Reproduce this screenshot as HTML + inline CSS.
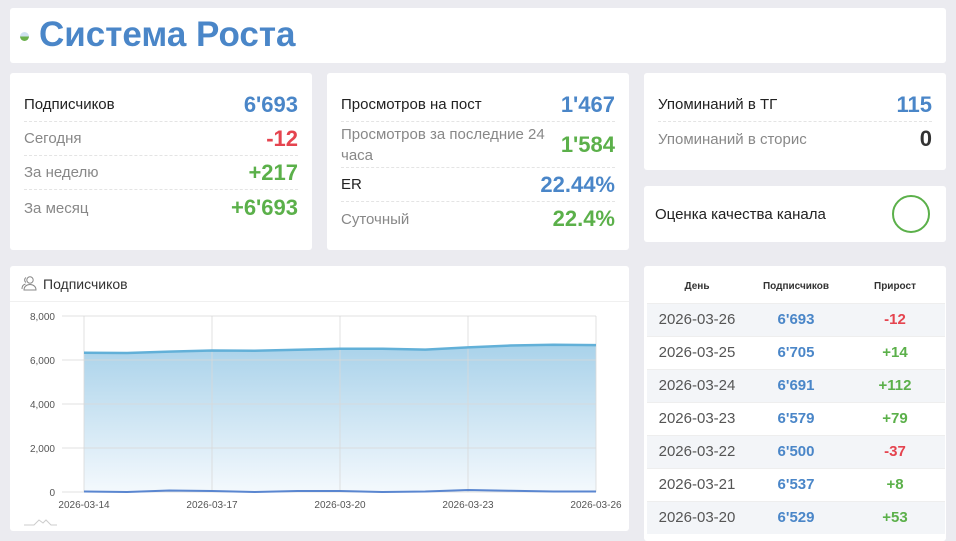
<!DOCTYPE html><html><head><meta charset="utf-8"><style>
*{margin:0;padding:0;box-sizing:border-box}
body{width:956px;height:536px;overflow:hidden;background:#ebebf0;font-family:"Liberation Sans",sans-serif;position:relative}
.card{position:absolute;background:#fff;border-radius:3px}
.row{position:absolute;left:14px;right:14px;display:flex;justify-content:space-between;align-items:center;border-bottom:1px dashed #e4e4e4}
.l{font-size:15px;color:#888}.l.b{color:#222}
.v{font-size:22px;font-weight:bold}
.blue{color:#4a86c8}.red{color:#e5444f}.green{color:#5bb04a}.dark{color:#333}
table{border-collapse:collapse;width:298px;table-layout:fixed}
td{height:33px;text-align:center;font-size:15px}
</style></head><body>
<div class="card" style="left:10px;top:8px;width:936px;height:55px">
<div style="position:absolute;left:10px;top:24px;width:9px;height:9px;border-radius:50%;background:linear-gradient(#cfe0f0 50%,#6ab04c 50%)"></div>
<div style="position:absolute;left:29px;top:7px;font-size:35px;font-weight:bold;color:#4a86c8">Система Роста</div></div>

<div class="card" style="left:10px;top:73px;width:302px;height:177px">
<div class="row" style="top:15px;height:34px"><span class="l b">Подписчиков</span><span class="v blue">6'693</span></div>
<div class="row" style="top:49px;height:34px"><span class="l">Сегодня</span><span class="v red">-12</span></div>
<div class="row" style="top:83px;height:34px"><span class="l">За неделю</span><span class="v green">+217</span></div>
<div class="row" style="top:117px;height:36px;border:0"><span class="l">За месяц</span><span class="v green">+6'693</span></div></div>

<div class="card" style="left:327px;top:73px;width:302px;height:177px">
<div class="row" style="top:15px;height:34px"><span class="l b">Просмотров на пост</span><span class="v blue">1'467</span></div>
<div class="row" style="top:49px;height:46px"><span class="l" style="width:210px;line-height:21px">Просмотров за последние 24 часа</span><span class="v green">1'584</span></div>
<div class="row" style="top:95px;height:34px"><span class="l b">ER</span><span class="v blue">22.44%</span></div>
<div class="row" style="top:129px;height:34px;border:0"><span class="l">Суточный</span><span class="v green">22.4%</span></div></div>

<div class="card" style="left:644px;top:73px;width:302px;height:97px">
<div class="row" style="top:15px;height:34px"><span class="l b">Упоминаний в ТГ</span><span class="v blue">115</span></div>
<div class="row" style="top:49px;height:34px;border:0"><span class="l">Упоминаний в сторис</span><span class="v dark">0</span></div></div>

<div class="card" style="left:644px;top:186px;width:302px;height:56px">
<div style="position:absolute;left:11px;top:20px;font-size:15px;color:#222">Оценка качества канала</div>
<div style="position:absolute;left:248px;top:9px;width:38px;height:38px;border-radius:50%;border:2px solid #5bb04a"></div></div>

<div class="card" style="left:10px;top:266px;width:619px;height:265px">
<div style="position:absolute;left:0;right:0;top:0;height:36px;border-bottom:1px solid #f0f0f0"></div>
<svg style="position:absolute;left:11px;top:9px" width="16" height="16" viewBox="0 0 16 16" fill="none" stroke="#888" stroke-width="1"><circle cx="9" cy="5" r="3.2"/><path d="M3 15c0-3.5 2.7-5.5 6-5.5s6 2 6 5.5z"/><path d="M5 2.5a3 3 0 0 0 0 5M1 14c0-3 1.5-4.5 3.5-5"/></svg>
<div style="position:absolute;left:33px;top:10px;font-size:14px;color:#333">Подписчиков</div>
</div>
<svg style="position:absolute;left:0;top:0" width="640" height="536">
<defs><linearGradient id="g" x1="0" y1="0" x2="0" y2="1"><stop offset="0" stop-color="#a9d2ea"/><stop offset="1" stop-color="#f4f9fd"/></linearGradient></defs>
<path d="M84 352.7L126.7 353L169.3 351.6L212 350.5L254.7 350.8L297.3 349.8L340 348.8L382.7 348.7L425.3 349.6L468 347.4L510.7 345.5L553.3 344.8L596 345.1L596 492L84 492Z" fill="url(#g)"/>
<g stroke="#d8d8d8" stroke-opacity="0.8"><line x1="62" y1="316" x2="596" y2="316"/><line x1="62" y1="360" x2="596" y2="360"/><line x1="62" y1="404" x2="596" y2="404"/><line x1="62" y1="448" x2="596" y2="448"/><line x1="62" y1="492" x2="596" y2="492"/>
<line x1="84" y1="316" x2="84" y2="492"/><line x1="212" y1="316" x2="212" y2="492"/><line x1="340" y1="316" x2="340" y2="492"/><line x1="468" y1="316" x2="468" y2="492"/><line x1="596" y1="316" x2="596" y2="492"/></g>
<path d="M84 352.7L126.7 353L169.3 351.6L212 350.5L254.7 350.8L297.3 349.8L340 348.8L382.7 348.7L425.3 349.6L468 347.4L510.7 345.5L553.3 344.8L596 345.1" fill="none" stroke="#62b0d8" stroke-width="2.5"/>
<path d="M84 491.5L126.7 492L169.3 490.5L212 491L254.7 492L297.3 491L340 491L382.7 492L425.3 491.5L468 490L510.7 490.8L553.3 491.5L596 491.5" fill="none" stroke="#5a86d0" stroke-width="2"/>
<g font-size="10" fill="#555" text-anchor="end"><text x="55" y="320">8,000</text><text x="55" y="364">6,000</text><text x="55" y="408">4,000</text><text x="55" y="452">2,000</text><text x="55" y="496">0</text></g>
<g font-size="10" fill="#555" text-anchor="middle"><text x="84" y="508">2026-03-14</text><text x="212" y="508">2026-03-17</text><text x="340" y="508">2026-03-20</text><text x="468" y="508">2026-03-23</text><text x="596" y="508">2026-03-26</text></g>
<path d="M24 525h10l5-5 4 3 3-3 5 5h6" fill="none" stroke="#ccc"/>
</svg>

<div class="card" style="left:644px;top:266px;width:302px;height:275px;padding:4px 1px 0 3px">
<table><colgroup><col style="width:100px"><col style="width:98px"><col style="width:100px"></colgroup>
<tr style="height:32px"><td style="font-size:10px;font-weight:bold;color:#333;height:32px">День</td><td style="font-size:10px;font-weight:bold;color:#333">Подписчиков</td><td style="font-size:10px;font-weight:bold;color:#333">Прирост</td></tr>
<tr style="background:#f3f5f8;border-top:1px solid #eee"><td style="color:#555">2026-03-26</td><td class="blue"><b>6'693</b></td><td class="red"><b>-12</b></td></tr>
<tr style="border-top:1px solid #eee"><td style="color:#555">2026-03-25</td><td class="blue"><b>6'705</b></td><td class="green"><b>+14</b></td></tr>
<tr style="background:#f3f5f8;border-top:1px solid #eee"><td style="color:#555">2026-03-24</td><td class="blue"><b>6'691</b></td><td class="green"><b>+112</b></td></tr>
<tr style="border-top:1px solid #eee"><td style="color:#555">2026-03-23</td><td class="blue"><b>6'579</b></td><td class="green"><b>+79</b></td></tr>
<tr style="background:#f3f5f8;border-top:1px solid #eee"><td style="color:#555">2026-03-22</td><td class="blue"><b>6'500</b></td><td class="red"><b>-37</b></td></tr>
<tr style="border-top:1px solid #eee"><td style="color:#555">2026-03-21</td><td class="blue"><b>6'537</b></td><td class="green"><b>+8</b></td></tr>
<tr style="background:#f3f5f8;border-top:1px solid #eee"><td style="color:#555">2026-03-20</td><td class="blue"><b>6'529</b></td><td class="green"><b>+53</b></td></tr>
</table></div>
</body></html>
